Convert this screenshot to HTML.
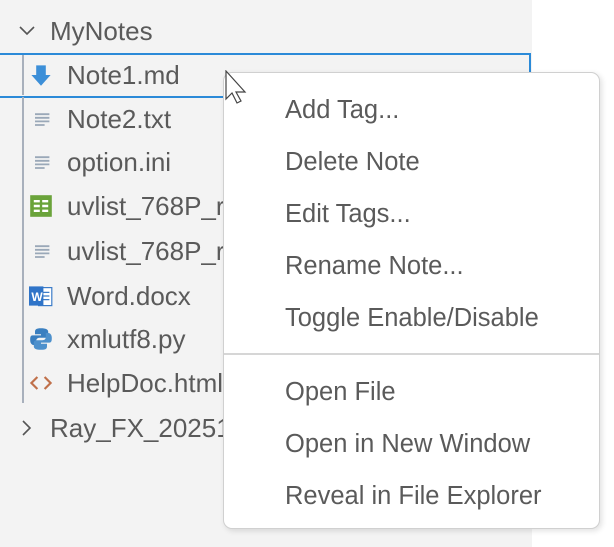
<!DOCTYPE html><html><head><meta charset="utf-8"><style>
body{margin:0;width:614px;height:547px;background:#fff;position:relative;overflow:hidden;font-family:"Liberation Sans",sans-serif;color:#555}
#panel{position:absolute;left:0;top:0;width:532px;height:547px;background:#f3f3f3}
.row{position:absolute;left:0;height:44px;line-height:44px;font-size:26px;white-space:nowrap;color:#5a5a5a}
.ic{position:absolute;left:29px;top:10px;width:24px;height:24px}
.t{position:absolute;left:67px}
#menu{position:absolute;left:223px;top:72px;width:375px;height:455px;background:#fff;border:1.5px solid #d0d0d0;border-radius:9px;box-shadow:2px 2px 6px rgba(0,0,0,.12)}
.mi{position:absolute;left:61px;font-size:25.5px;color:#5a5a5a;line-height:30px}
</style></head><body>
<div id="panel"></div>
<div style="position:absolute;left:0;top:53px;width:529px;height:41px;border:2px solid #2b8ad8;border-left:none"></div>
<div style="position:absolute;left:22px;top:97px;width:2px;height:306px;background:#a8b0bc"></div>
<div style="position:absolute;left:22px;top:55px;width:2px;height:40px;background:#a8b0bc"></div>
<div class="row" style="top:9px"><svg style="position:absolute;left:18px;top:15px" width="18" height="12"><path d="M2 3l7 7 7-7" fill="none" stroke="#555" stroke-width="1.6"/></svg><span style="position:absolute;left:50px">MyNotes</span></div>
<div class="row" style="top:53px"><svg class="ic" viewBox="0 0 20 20"><path d="M6 2h8v8h4l-8 9-8-9h4z" fill="#3c8fd8"/></svg><span class="t">Note1.md</span></div>
<div class="row" style="top:97px"><svg class="ic" viewBox="0 0 20 20"><path d="M5 6h12M5 9h12M5 12h12M5 15h8" stroke="#9aa8b8" stroke-width="1.5"/></svg><span class="t">Note2.txt</span></div>
<div class="row" style="top:140px"><svg class="ic" viewBox="0 0 20 20"><path d="M5 6h12M5 9h12M5 12h12M5 15h8" stroke="#9aa8b8" stroke-width="1.5"/></svg><span class="t">option.ini</span></div>
<div class="row" style="top:184px"><svg class="ic" viewBox="0 0 20 20"><rect x="1" y="1" width="18" height="18" fill="#6aa33a"/><path d="M4 6h5M11 6h5M4 10h5M11 10h5M4 14h5M11 14h5" stroke="#fff" stroke-width="2"/></svg><span class="t">uvlist_768P_re</span></div>
<div class="row" style="top:229px"><svg class="ic" viewBox="0 0 20 20"><path d="M5 6h12M5 9h12M5 12h12M5 15h8" stroke="#9aa8b8" stroke-width="1.5"/></svg><span class="t">uvlist_768P_re</span></div>
<div class="row" style="top:274px"><svg class="ic" viewBox="0 0 20 20"><rect x="8" y="3" width="11" height="15" fill="#fff" stroke="#3c7cc8"/><path d="M11 7h6M11 10h6M11 13h6" stroke="#3c7cc8"/><rect x="0" y="2" width="12" height="16" fill="#2f74c8"/><text x="2" y="14" font-size="10" fill="#fff" font-family="Liberation Sans" font-weight="bold">W</text></svg><span class="t">Word.docx</span></div>
<div class="row" style="top:317px"><svg class="ic" viewBox="0 0 20 20"><path d="M10 1c-4 0-5 1-5 3v2h5v1H3C1 7 1 9 1 11s1 4 3 4h2v-3c0-2 1-3 3-3h5c1 0 2-1 2-2V4c0-2-2-3-6-3z" fill="#3a7fc0"/><path d="M10 19c4 0 5-1 5-3v-2h-5v-1h7c2 0 2-2 2-4s-1-4-3-4h-2v3c0 2-1 3-3 3H6c-1 0-2 1-2 2v3c0 2 2 3 6 3z" fill="#4d90cc"/></svg><span class="t">xmlutf8.py</span></div>
<div class="row" style="top:361px"><svg class="ic" viewBox="0 0 20 20"><path d="M7 5l-5 5 5 5M13 5l5 5-5 5" fill="none" stroke="#c0704a" stroke-width="1.8"/></svg><span class="t">HelpDoc.html</span></div>
<div class="row" style="top:406px"><svg style="position:absolute;left:20px;top:13px" width="12" height="18"><path d="M3 2l7 7-7 7" fill="none" stroke="#555" stroke-width="1.6"/></svg><span style="position:absolute;left:50px">Ray_FX_202510</span></div>
<div id="menu">
<div class="mi" style="top:22px">Add Tag...</div>
<div class="mi" style="top:74px">Delete Note</div>
<div class="mi" style="top:126px">Edit Tags...</div>
<div class="mi" style="top:178px">Rename Note...</div>
<div class="mi" style="top:230px">Toggle Enable/Disable</div>
<div style="position:absolute;left:0;right:0;top:280px;height:2px;background:#d6d6d6"></div>
<div class="mi" style="top:304px">Open File</div>
<div class="mi" style="top:356px">Open in New Window</div>
<div class="mi" style="top:408px">Reveal in File Explorer</div>
</div>
<svg style="position:absolute;left:224px;top:70px" width="30" height="40"><path d="M2 1v28l6-6 5 10 4-2-5-9h9z" fill="#fff" stroke="#444" stroke-width="1.2"/></svg>
</body></html>
